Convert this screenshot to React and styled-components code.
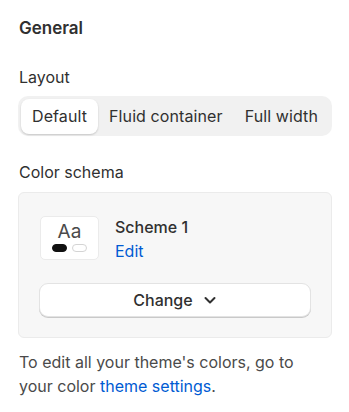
import React, { useState } from 'react';
import styled, { createGlobalStyle } from 'styled-components';

const Global = createGlobalStyle`
  * { box-sizing: border-box; }
  body {
    margin: 0;
    background: #ffffff;
    font-family: Inter, 'Noto Sans', sans-serif;
    color: #303030;
  }
`;

const Panel = styled.div`
  width: 349px;
  padding: 16px 17px 20px 18px;
  display: flex;
  flex-direction: column;
`;

const Title = styled.h2`
  margin: 0 0 0 1px;
  font-size: 17px;
  line-height: 24px;
  font-weight: 600;
  color: #303030;
`;

const Label = styled.div`
  margin: ${(p) => p.$top}px 0 0 1px;
  font-size: 16px;
  line-height: 22px;
  color: #303030;
`;

const Segmented = styled.div`
  margin-top: 8px;
  height: 40px;
  padding: 2px 3px;
  display: flex;
  align-items: center;
  background: #f1f1f1;
  border-radius: 10px;
`;

const Segment = styled.button`
  height: 35px;
  padding: 0 11px;
  border: none;
  border-radius: 8px;
  font-family: inherit;
  font-size: 16px;
  letter-spacing: 0.1px;
  color: #303030;
  cursor: pointer;
  background: ${(p) => (p.$active ? '#ffffff' : 'transparent')};
  box-shadow: ${(p) => (p.$active ? '0 1px 2px rgba(0,0,0,0.18)' : 'none')};
  white-space: nowrap;
`;

const Card = styled.div`
  margin-top: 9px;
  padding: 22px 20px 20px 20px;
  background: #f7f7f7;
  border: 1px solid #ebebeb;
  border-radius: 6px;
  display: flex;
  flex-direction: column;
  gap: 20px;
`;

const Scheme = styled.div`
  display: flex;
  align-items: flex-start;
  gap: 16px;
`;

const Preview = styled.div`
  width: 59px;
  height: 44px;
  margin: 1px 0 0 1px;
  background: #ffffff;
  border: 1px solid #ebebeb;
  border-radius: 5px;
  display: flex;
  flex-direction: column;
  align-items: center;
  padding-top: 5px;
`;

const Aa = styled.span`
  font-size: 19px;
  line-height: 20px;
  color: #4a4a4a;
`;

const Dots = styled.div`
  display: flex;
  gap: 5px;
  margin-top: 2px;
`;

const Dot = styled.span`
  width: 15px;
  height: 8px;
  border-radius: 4px;
  background: ${(p) => (p.$dark ? '#111111' : '#ffffff')};
  border: 1px solid ${(p) => (p.$dark ? '#111111' : '#d4d4d4')};
`;

const Info = styled.div`
  display: flex;
  flex-direction: column;
`;

const SchemeName = styled.span`
  font-size: 16px;
  line-height: 24px;
  font-weight: 500;
  color: #303030;
`;

const Link = styled.a`
  font-size: inherit;
  line-height: inherit;
  color: #005bd3;
  text-decoration: none;
  cursor: pointer;
`;

const EditLink = styled(Link)`
  font-size: 16px;
  line-height: 24px;
`;

const ChangeButton = styled.button`
  height: 34px;
  border: 1px solid #e3e3e3;
  border-radius: 9px;
  background: #ffffff;
  box-shadow: 0 1px 0 #c9c9c9;
  display: flex;
  align-items: center;
  justify-content: center;
  gap: 10px;
  font-family: inherit;
  font-size: 16px;
  font-weight: 500;
  color: #303030;
  cursor: pointer;
`;

const Note = styled.p`
  margin: 12px 20px 0 1px;
  font-size: 16px;
  line-height: 24px;
  color: #4a4a4a;
`;

const Chevron = () => (
  <svg width="14" height="14" viewBox="0 0 14 14" fill="none">
    <path d="M2.5 5l4.5 4.5 4.5-4.5" stroke="#303030" strokeWidth="2" strokeLinecap="round" strokeLinejoin="round" />
  </svg>
);

export default function App() {
  const [layout, setLayout] = useState('Default');
  const options = ['Default', 'Fluid container', 'Full width'];
  return (
    <Panel>
      <Global />
      <Title>General</Title>
      <Label $top={26}>Layout</Label>
      <Segmented>
        {options.map((o) => (
          <Segment key={o} $active={layout === o} onClick={() => setLayout(o)}>
            {o}
          </Segment>
        ))}
      </Segmented>
      <Label $top={25}>Color schema</Label>
      <Card>
        <Scheme>
          <Preview>
            <Aa>Aa</Aa>
            <Dots>
              <Dot $dark />
              <Dot />
            </Dots>
          </Preview>
          <Info>
            <SchemeName>Scheme 1</SchemeName>
            <EditLink>Edit</EditLink>
          </Info>
        </Scheme>
        <ChangeButton>
          Change <Chevron />
        </ChangeButton>
      </Card>
      <Note>
        To edit all your theme's colors, go to your color <Link>theme settings</Link>.
      </Note>
    </Panel>
  );
}
